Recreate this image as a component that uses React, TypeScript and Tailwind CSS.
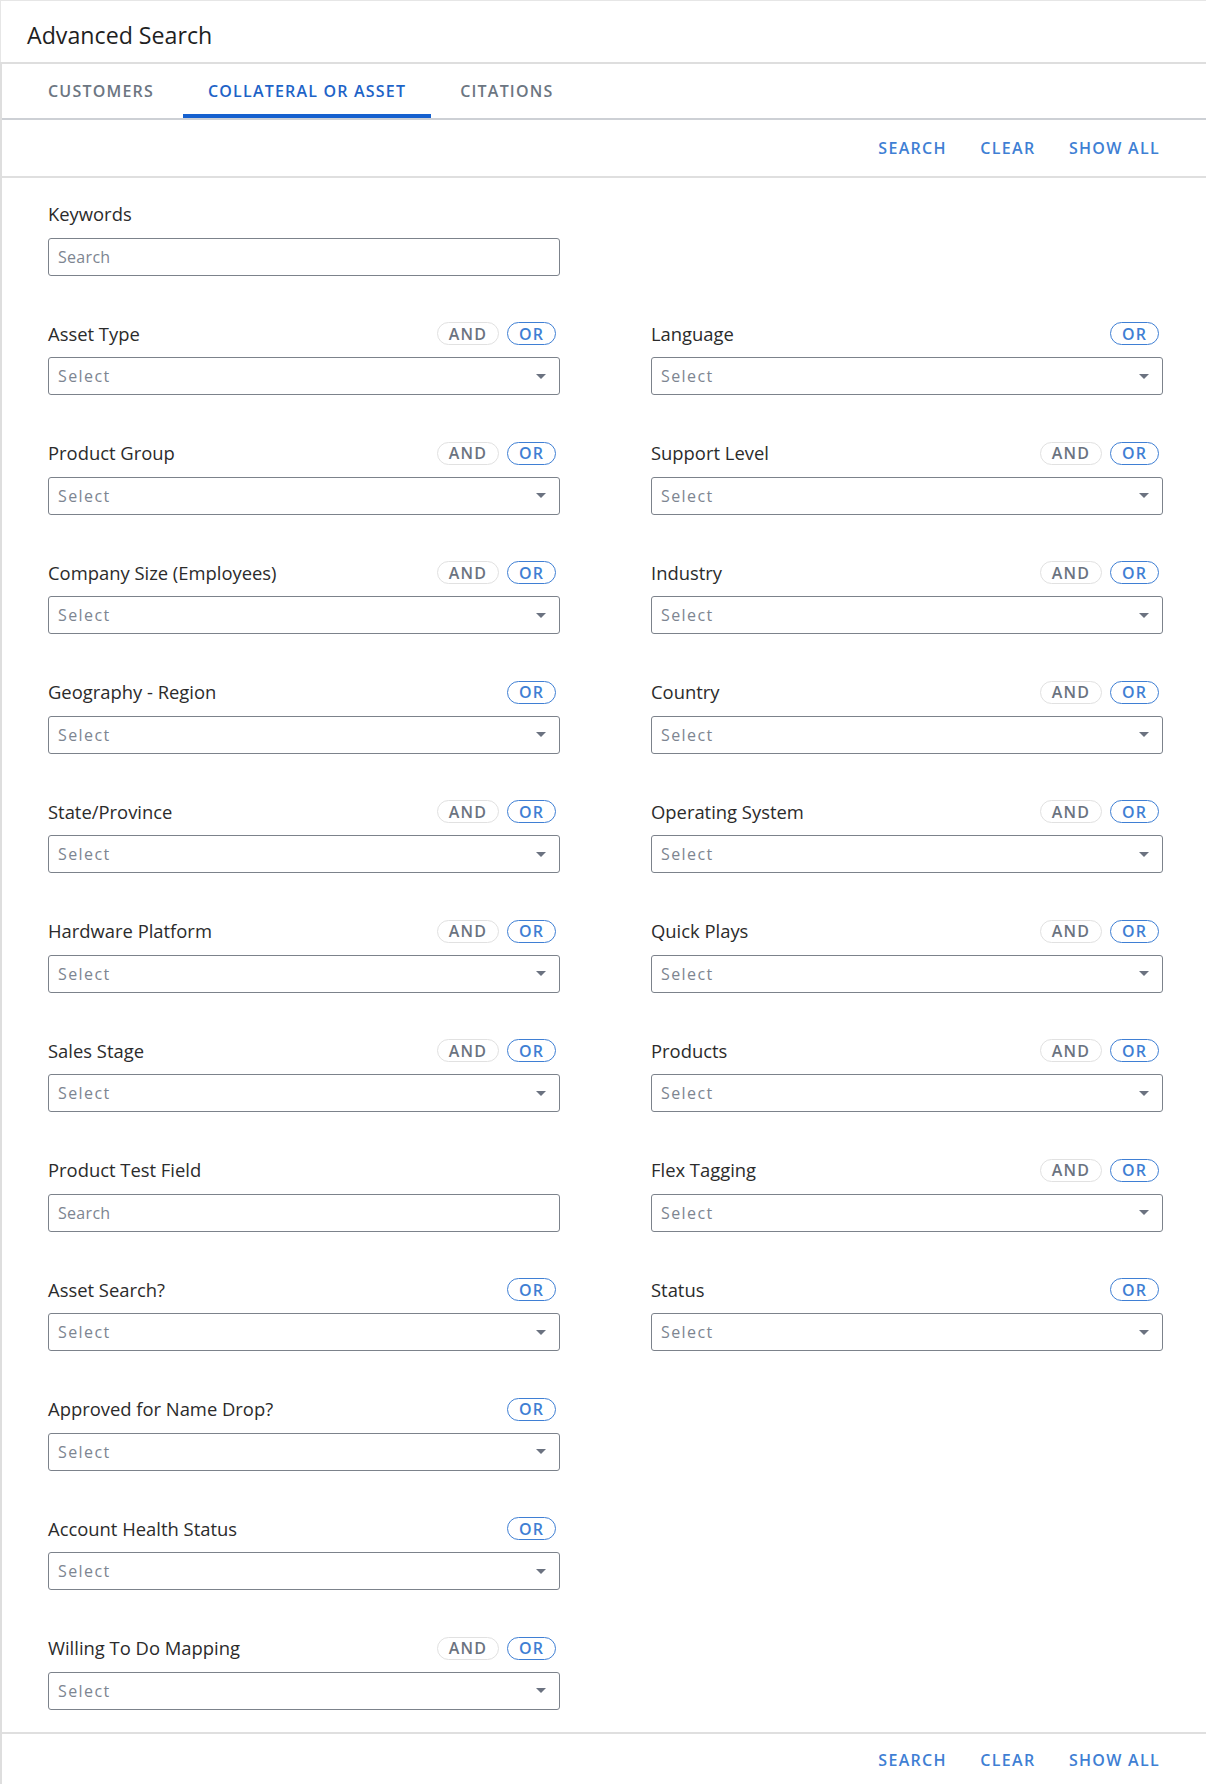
import React from 'react';

type Ops = 'both' | 'or' | 'none';

type Field = {
    label: string;
    ops: Ops;
    kind: 'select' | 'search';
};

// null = empty cell in the right column
const rows: [Field, Field | null][] = [
    [{ label: 'Keywords', ops: 'none', kind: 'search' }, null],
    [{ label: 'Asset Type', ops: 'both', kind: 'select' }, { label: 'Language', ops: 'or', kind: 'select' }],
    [{ label: 'Product Group', ops: 'both', kind: 'select' }, { label: 'Support Level', ops: 'both', kind: 'select' }],
    [{ label: 'Company Size (Employees)', ops: 'both', kind: 'select' }, { label: 'Industry', ops: 'both', kind: 'select' }],
    [{ label: 'Geography - Region', ops: 'or', kind: 'select' }, { label: 'Country', ops: 'both', kind: 'select' }],
    [{ label: 'State/Province', ops: 'both', kind: 'select' }, { label: 'Operating System', ops: 'both', kind: 'select' }],
    [{ label: 'Hardware Platform', ops: 'both', kind: 'select' }, { label: 'Quick Plays', ops: 'both', kind: 'select' }],
    [{ label: 'Sales Stage', ops: 'both', kind: 'select' }, { label: 'Products', ops: 'both', kind: 'select' }],
    [{ label: 'Product Test Field', ops: 'none', kind: 'search' }, { label: 'Flex Tagging', ops: 'both', kind: 'select' }],
    [{ label: 'Asset Search?', ops: 'or', kind: 'select' }, { label: 'Status', ops: 'or', kind: 'select' }],
    [{ label: 'Approved for Name Drop?', ops: 'or', kind: 'select' }, null],
    [{ label: 'Account Health Status', ops: 'or', kind: 'select' }, null],
    [{ label: 'Willing To Do Mapping', ops: 'both', kind: 'select' }, null],
];

const tabs = ['CUSTOMERS', 'COLLATERAL OR ASSET', 'CITATIONS'];

function ActionBar({ border }: { border: 'top' | 'bottom' }) {
    return (
        <div
            className={
                border === 'bottom'
                    ? 'h-[58px] border-b-2 border-[#dfdfdf] flex items-center justify-end gap-[33.5px] pr-[46px]'
                    : 'h-[54px] border-t-2 border-[#dfdfdf] flex items-center justify-end gap-[33.5px] pr-[46px]'
            }
        >
            <button className="text-[16px] font-semibold tracking-[1.3px] text-[#3f7fd4]">SEARCH</button>
            <button className="text-[16px] font-semibold tracking-[1.3px] text-[#3f7fd4]">CLEAR</button>
            <button className="text-[16px] font-semibold tracking-[1.3px] text-[#3f7fd4]">SHOW ALL</button>
        </div>
    );
}

function OpPills({ ops }: { ops: Ops }) {
    if (ops === 'none') return null;
    return (
        <div className="flex items-center gap-2 pr-1">
            {ops === 'both' && (
                <span className="w-[62px] h-[23px] rounded-full border border-[#e1e1e1] flex items-center justify-center text-[16px] font-semibold tracking-[1.2px] text-[#6b7380]">
                    AND
                </span>
            )}
            <span className="w-[49px] h-[23px] rounded-full border border-[#3f7fd4] flex items-center justify-center text-[16px] font-semibold tracking-[1.2px] text-[#3f7fd4]">
                OR
            </span>
        </div>
    );
}

function FieldCell({ field }: { field: Field | null }) {
    if (!field) return <div />;
    return (
        <div className="flex flex-col">
            <div className="h-[24px] flex items-center justify-between">
                <label className="text-[18.4px] text-[#2b2b2b]">{field.label}</label>
                <OpPills ops={field.ops} />
            </div>
            {field.kind === 'search' ? (
                <input
                    placeholder="Search"
                    className="mt-[11.5px] h-[38px] w-full rounded-[3px] border border-[#7c828b] px-[9px] text-[16px] tracking-[0.3px] text-[#333] placeholder:text-[#7d8591] outline-none"
                />
            ) : (
                <div className="mt-[11.5px] h-[38px] w-full rounded-[3px] border border-[#7c828b] pl-[9px] pr-[13px] flex items-center justify-between">
                    <span className="text-[16px] tracking-[1.4px] text-[#7d8591]">Select</span>
                    <svg width="10" height="5" viewBox="0 0 10 5">
                        <path d="M0 0 L10 0 L5 5 Z" fill="#6b7280" />
                    </svg>
                </div>
            )}
        </div>
    );
}

export default function App() {
    return (
        <div className="w-[1206px] min-h-[1784px] bg-white font-['Open_Sans','Noto_Sans',sans-serif]">
            {/* page title */}
            <div className="h-[62px] border-t border-l border-[#e6e6e6] pl-[26px] flex items-center">
                <h1 className="text-[23.2px] text-[#1f1f1f] pt-[8px]">Advanced Search</h1>
            </div>

            <div className="border-l-2 border-t-2 border-[#dedede]">
                {/* tabs */}
                <div className="h-[56px] border-b-2 border-[#cdd0d5] flex pl-[21px] gap-1">
                    {tabs.map((t) => (
                        <div
                            key={t}
                            className={
                                t === 'COLLATERAL OR ASSET'
                                    ? 'px-[25px] flex items-center border-y-4 border-t-transparent border-b-[#1661cf] text-[16px] font-semibold tracking-[1.2px] text-[#1e63c7]'
                                    : 'px-[25px] flex items-center border-y-4 border-transparent text-[16px] font-semibold tracking-[1.2px] text-[#6c7682]'
                            }
                        >
                            {t}
                        </div>
                    ))}
                </div>

                <ActionBar border="bottom" />

                {/* search fields */}
                <div className="pt-6 pb-[22px] pl-[46px] grid grid-cols-[512px_512px] gap-x-[91px] gap-y-[46px]">
                    {rows.map(([left, right], i) => (
                        <React.Fragment key={i}>
                            <FieldCell field={left} />
                            <FieldCell field={right} />
                        </React.Fragment>
                    ))}
                </div>

                <ActionBar border="top" />
            </div>
        </div>
    );
}
